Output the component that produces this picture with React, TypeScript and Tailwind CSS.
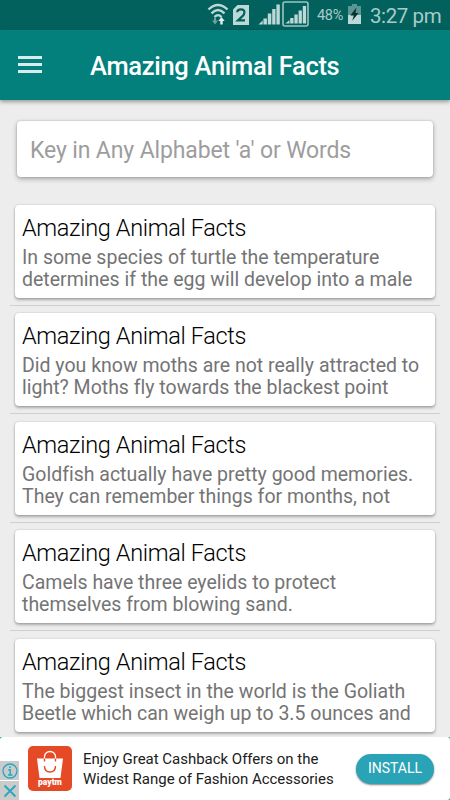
import React from "react";

interface Fact {
  id: number;
  lines: string[];
}

const FACTS: Fact[] = [
  { id: 1, lines: ["In some species of turtle the temperature", "determines if the egg will develop into a male"] },
  { id: 2, lines: ["Did you know moths are not really attracted to", "light? Moths fly towards the blackest point"] },
  { id: 3, lines: ["Goldfish actually have pretty good memories.", "They can remember things for months, not"] },
  { id: 4, lines: ["Camels have three eyelids to protect", "themselves from blowing sand."] },
  { id: 5, lines: ["The biggest insect in the world is the Goliath", "Beetle which can weigh up to 3.5 ounces and"] },
];

function WifiIcon() {
  return (
    <svg width="22" height="24" viewBox="0 0 22 24" fill="none" stroke="#bcd8d7" strokeWidth="2.4">
      <path d="M1.5 6.5Q11 -2.5 20.5 6.5" />
      <path d="M4.5 10.3Q11 3.8 17.5 10.3" />
      <path d="M7.5 14Q11 10.2 14.5 14" />
      <path d="M8 14.5v4" stroke="#6ba3a1" strokeWidth="2" />
      <path d="M5 17.5h6l-3 4z" fill="#6ba3a1" stroke="none" />
      <path d="M14.5 21.5v-4" stroke="#e4efef" strokeWidth="2.4" />
      <path d="M11.300 18h6.400l-3.200-4z" fill="#e4efef" stroke="none" />
    </svg>
  );
}

function SignalIcon({ boxed = false }: { boxed?: boolean }) {
  return (
    <svg width="27" height="26" viewBox="0 0 27 26" fill="#bcd8d7">
      {boxed && <rect x="1" y="1" width="25" height="24" rx="2" fill="none" stroke="#9cc4c2" strokeWidth="1.6" />}
      {boxed ? (
        <path d="M3.5 22.500l4-3.500v3.500zM8.200 17h3.300v5.500H8.200zM12.400 13.500h3.300v9h-3.300zM16.600 9.500h3.300v13h-3.300zM20.800 5h3.300v17.500h-3.300z" />
      ) : (
        <path d="M2.500 23.500l4.200-4v4zM7.400 17.500h3.500v6H7.400zM11.800 12.500h3.500v11h-3.500zM16.200 8h3.300v15.500h-3.300zM20.400 3.500h3.400v20h-3.400z" />
      )}
    </svg>
  );
}

function BatteryIcon() {
  return (
    <svg width="13" height="20" viewBox="0 0 13 20">
      <path d="M4 0h5v2h4v9H0V2h4z" fill="#5a9794" />
      <path d="M0 11h13v9H0z" fill="#bcd8d7" />
      <path d="M8.5 3.5L2.3 11.4h3.5L4.2 16.8l6.4-7.7H7.4z" fill="#06302f" />
    </svg>
  );
}

function StatusBar() {
  return (
    <div className="flex h-[30px] items-start bg-[#02605d] pl-[207px] text-[#a9cbc9]">
      <div className="mt-[3px] w-[22px]">
        <WifiIcon />
      </div>
      <svg className="ml-1 mt-[5px] shrink-0" width="16" height="20" viewBox="0 0 16 20">
        <path d="M4.500 0H16v20H0V4.500z" fill="#bcd8d7" />
        <path d="M4.200 7.200Q4.300 4.300 7.900 4.300t3.500 3.100q0 1.800-1.900 3.700L5 15.300h7" fill="none" stroke="#02605d" strokeWidth="2.200" />
      </svg>
      <div className="ml-[7px] mt-[1px] flex shrink-0">
        <div className="w-[26px]">
          <SignalIcon />
        </div>
        <SignalIcon boxed />
      </div>
      <span className="ml-[8px] mt-[6px] w-[31px] whitespace-nowrap text-[14.5px] leading-5 tracking-[-0.3px]">48%</span>
      <div className="mt-[4px]">
        <BatteryIcon />
      </div>
      <span className="ml-[9px] mt-[4px] whitespace-nowrap text-[20.5px] leading-6 tracking-[-0.4px]">3:27 pm</span>
    </div>
  );
}

function AppBar() {
  return (
    <div className="relative z-10 flex h-[70px] items-center bg-[#037f7c] pl-[18px] shadow-[0_2px_4px_rgba(0,0,0,0.35)]">
      <button className="mb-px flex w-6 flex-col gap-[4px]" title="Menu">
        <span className="h-[3px] bg-white/85" />
        <span className="h-[3px] bg-white/85" />
        <span className="h-[3px] bg-white/85" />
      </button>
      <h1 className="ml-12 mt-[2px] whitespace-nowrap text-[25.5px] font-medium leading-8 tracking-[-0.3px] text-white">Amazing Animal Facts</h1>
    </div>
  );
}

function FactCard({ fact }: { fact: Fact }) {
  return (
    <li className="h-[108.4px] shrink-0">
      <div className="mx-[5px] h-[93px] rounded-[4px] bg-white px-[7px] pt-[9px] shadow-[0_2px_3px_rgba(0,0,0,0.28),0_0_2px_rgba(0,0,0,0.2)]">
        <h2 className="whitespace-nowrap text-[23.5px] font-light leading-7 tracking-[-0.34px] text-black">Amazing Animal Facts</h2>
        <p className="mt-[5px] whitespace-nowrap text-[19.5px] leading-[22px] text-[#747474]">
          {fact.lines.map((line) => (
            <span key={line} className="block">{line}</span>
          ))}
        </p>
      </div>
      <div className="mt-[7px] h-px bg-[#cfcfcf]" />
    </li>
  );
}

function AdBanner() {
  return (
    <div className="relative z-10 h-[63px] shrink-0 bg-[#2aa3b7]">
      <div className="flex h-full rounded-[3px] bg-white">
        <div className="mt-[24px] flex w-[19px] flex-col gap-[1px]">
          <div className="flex h-[19px] items-center justify-center bg-[#cbcbcb]">
            <svg width="16" height="16" viewBox="0 0 16 16" fill="none" stroke="#26a8bd" strokeWidth="1.3">
              <circle cx="8" cy="8" r="7" />
              <path d="M6.3 6.8h1.900v5M6 12h4.500M8 3.200v1.800" strokeWidth="1.5" />
            </svg>
          </div>
          <div className="flex h-[19px] items-center justify-center bg-[#cbcbcb]">
            <svg width="14" height="14" viewBox="0 0 14 14" stroke="#26a8bd" strokeWidth="1.8">
              <path d="M1.5 1.5l11 11M12.5 1.5l-11 11" />
            </svg>
          </div>
        </div>
        <div className="relative ml-[9px] mt-[9px] h-[45px] w-[44px] rounded-[5px] bg-[#e64925]">
          <svg width="44" height="45" viewBox="0 0 44 45" fill="none">
            <path d="M9 12.500h26L32.500 32h-21z" fill="white" />
            <path d="M16.500 14V10.500a5.500 5 0 0 1 11 0V14" stroke="#fff" strokeWidth="1.3" />
            <path d="M16.500 12.500v3M27.500 12.500v3M16.500 20q0 6 5.500 6t5.500-6" stroke="#e64925" strokeWidth="1.4" />
          </svg>
          <span className="absolute inset-x-0 bottom-[5px] text-center text-[8.5px] font-black leading-[8px] text-white">paytm</span>
        </div>
        <p className="ml-[11px] mt-[12px] w-[272px] whitespace-nowrap text-[15px] leading-5 tracking-[-0.02px] text-[#202020]">
          Enjoy Great Cashback Offers on the
          <br />
          Widest Range of Fashion Accessories
        </p>
        <button className="ml-px mt-[17px] h-[30px] w-[78px] rounded-full bg-[#2aa3b7] pb-[2px] text-[14px] leading-[26px] text-white shadow-[0_1px_2px_rgba(0,0,0,0.5)]">
          INSTALL
        </button>
      </div>
    </div>
  );
}

export default function App() {
  return (
    <div className="flex h-[800px] w-[450px] flex-col overflow-hidden bg-[#ededed] font-['Roboto',sans-serif] [font-variant-ligatures:none]">
      <StatusBar />
      <AppBar />
      <main className="flex h-[637px] flex-col overflow-hidden">
        <input
          className="ml-[17px] mt-[21px] h-[56px] w-[416px] shrink-0 rounded-[4px] bg-white px-[13px] pt-[2px] text-[23px] tracking-[-0.13px] shadow-[0_2px_5px_rgba(0,0,0,0.3),0_0_2px_rgba(0,0,0,0.2)] outline-none placeholder:text-[#9d9d9d]"
          placeholder="Key in Any Alphabet 'a' or Words"
        />
        <ul className="mx-[10px] mt-[28px] flex flex-col">
          {FACTS.map((fact) => (
            <FactCard key={fact.id} fact={fact} />
          ))}
        </ul>
      </main>
      <AdBanner />
    </div>
  );
}
